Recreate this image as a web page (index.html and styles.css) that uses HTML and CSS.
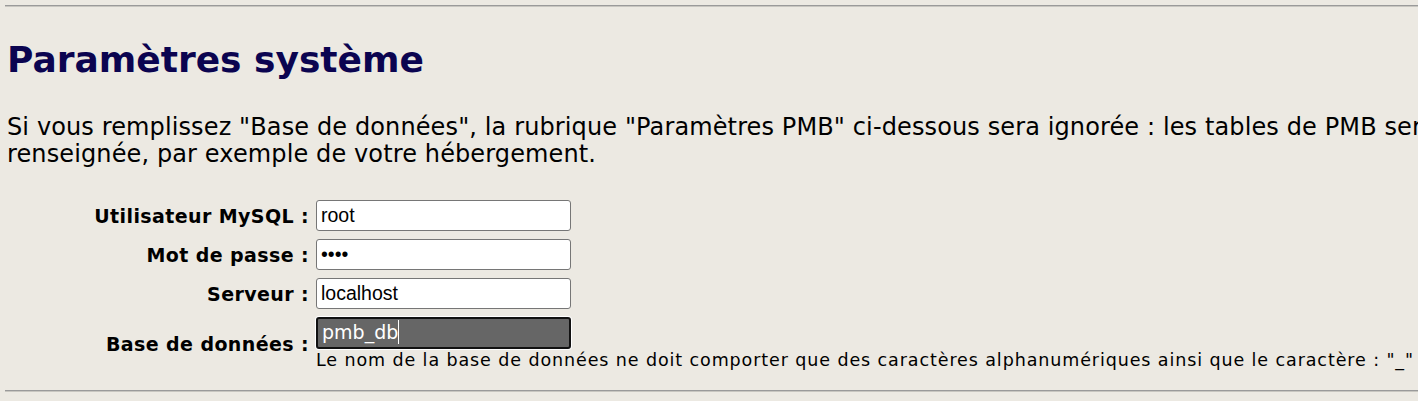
FILE: index.html
```html
<!DOCTYPE html>
<html lang="fr">
<head>
<meta charset="utf-8">
<title>Paramètres système</title>
<link rel="stylesheet" href="styles.css">
</head>
<body>
<div class="page">
  <hr class="rule">
  <h1 class="title">Paramètres système</h1>
  <p class="intro">Si vous remplissez "Base de données", la rubrique "Paramètres PMB" ci-dessous sera ignorée : les tables de PMB seront créées dans la base<br>renseignée, par exemple de votre hébergement.</p>
  <div class="form">
    <label class="lbl" for="u">Utilisateur MySQL :</label>
    <div class="field"><input class="inp" id="u" type="text" value="root"></div>
    <label class="lbl" for="p">Mot de passe :</label>
    <div class="field"><input class="inp" id="p" type="text" value="••••"></div>
    <label class="lbl" for="s">Serveur :</label>
    <div class="field"><input class="inp" id="s" type="text" value="localhost"></div>
    <label class="lbl lbl-db" for="d">Base de données :</label>
    <div class="field">
      <div class="inp focus" id="d"><span>pmb_db</span><span class="caret"></span></div>
      <div class="help">Le nom de la base de données ne doit comporter que des caractères alphanumériques ainsi que le caractère : "_"</div>
    </div>
  </div>
  <hr class="rule rule-bottom">
</div>
</body>
</html>
```

FILE: styles.css
```css
html, body {
  margin: 0;
  padding: 0;
  background: #ece9e2;
  overflow: hidden;
}
body {
  font-family: "DejaVu Sans", Verdana, sans-serif;
  color: #000;
}
.page {
  width: 1800px;
  padding: 5px 0 0 5px;
}
.rule {
  margin: 0;
  border: 0;
  border-top: 1px solid #9a9a9a;
  border-bottom: 1px solid #c8c6c0;
  height: 0;
}
.title {
  margin: 32px 0 0 2px;
  font-size: 36px;
  line-height: 42px;
  font-weight: bold;
  color: #0b0450;
}
.intro {
  margin: 33px 0 0 2px;
  font-size: 24px;
  letter-spacing: 0.12px;
  line-height: 27px;
  white-space: nowrap;
}
.form {
  margin-top: 32px;
  display: grid;
  grid-template-columns: 304px 255px;
  column-gap: 7px;
  row-gap: 8px;
  align-items: center;
}
.lbl {
  text-align: right;
  font-weight: bold;
  font-size: 19px;
  letter-spacing: 0.4px;
}
.lbl-db {
  align-self: start;
  padding-top: 16px;
}
.field {
  display: flex;
  flex-direction: column;
}
.inp {
  box-sizing: border-box;
  width: 255px;
  height: 31px;
  border: 1px solid #767676;
  border-radius: 3px;
  background: #fff;
  font-family: "Liberation Sans", Arial, sans-serif;
  font-size: 19.5px;
  padding: 0 4px;
  color: #000;
}
.focus {
  height: 32px;
  background: #666;
  color: #fff;
  border: 2px solid #111;
  border-radius: 3px;
  box-shadow: 0 0 0 1px #fff;
  display: flex;
  align-items: center;
  padding: 0 4px 2px;
  font-family: "DejaVu Sans", Verdana, sans-serif;
  font-size: 19px;
}
.caret {
  display: inline-block;
  width: 1px;
  height: 24px;
  background: #fff;
}
.help {
  white-space: nowrap;
  font-size: 17.5px;
  letter-spacing: 0.9px;
  line-height: 20px;
  margin-top: 1px;
}
.rule-bottom {
  margin-top: 20px;
}
```
